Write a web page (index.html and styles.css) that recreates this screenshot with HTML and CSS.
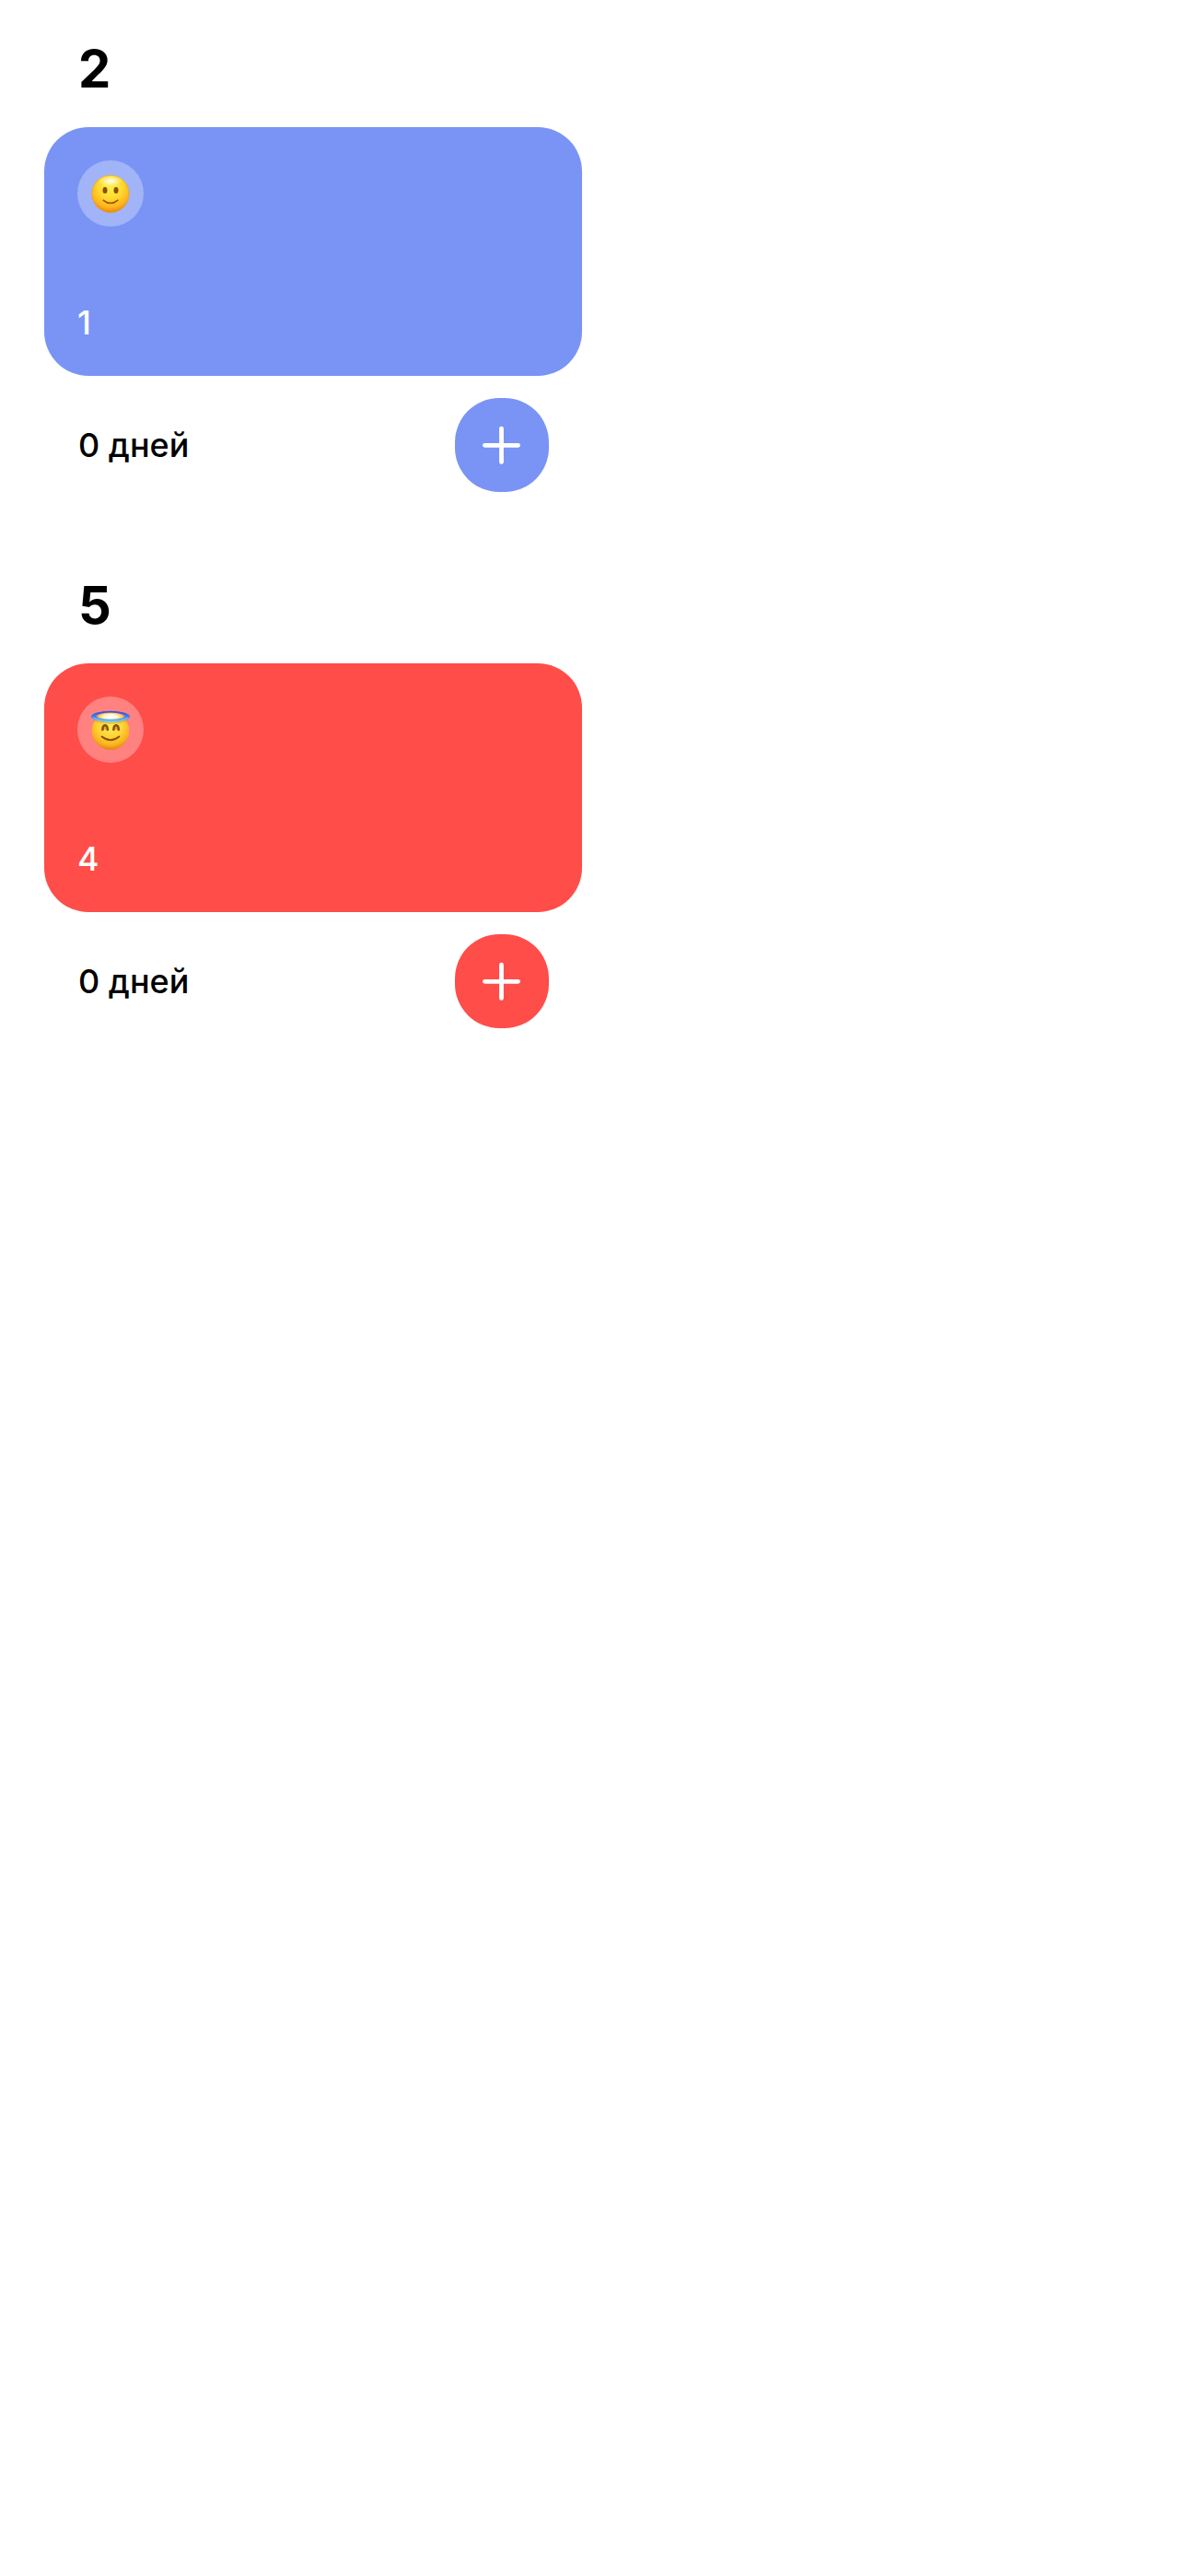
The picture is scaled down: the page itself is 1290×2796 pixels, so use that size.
FILE: index.html
```html
<!DOCTYPE html>
<html lang="ru">
<head>
<meta charset="utf-8">
<title>Трекеры</title>
<link rel="stylesheet" href="styles.css">
</head>
<body>
<main class="trackers">
  <section class="category blue">
    <h2 class="category-title">2</h2>
    <article class="card">
      <span class="emoji">
        <svg width="48" height="48" viewBox="0 0 48 48" role="img" aria-label="Улыбка">
          <defs>
            <radialGradient id="smile-face" gradientUnits="userSpaceOnUse" cx="24" cy="17" r="29">
              <stop offset="0" stop-color="#fff04a"/>
              <stop offset=".45" stop-color="#ffd830"/>
              <stop offset=".75" stop-color="#ffb51c"/>
              <stop offset="1" stop-color="#e57f08"/>
            </radialGradient>
            <radialGradient id="smile-shine">
              <stop offset="0" stop-color="#fff" stop-opacity=".95"/>
              <stop offset=".4" stop-color="#fffde0" stop-opacity=".65"/>
              <stop offset="1" stop-color="#fff8a0" stop-opacity="0"/>
            </radialGradient>
          </defs>
          <circle cx="24" cy="24.3" r="20.4" fill="url(#smile-face)"/>
          <circle cx="24" cy="24.3" r="19.9" fill="none" stroke="#e39a12" stroke-opacity=".5" stroke-width="1"/>
          <ellipse cx="24" cy="10.5" rx="14" ry="6.3" fill="url(#smile-shine)"/>
          <ellipse cx="18" cy="20.4" rx="2.5" ry="3.5" fill="#895000"/>
          <ellipse cx="30" cy="20.4" rx="2.5" ry="3.5" fill="#895000"/>
          <path d="M16.2 31.3Q24 37.8 31.8 31.3" fill="none" stroke="#8e5300" stroke-width="1.5" stroke-linecap="round"/>
        </svg>
      </span>
      <p class="card-name">1</p>
    </article>
    <div class="footer">
      <span class="days">0 дней</span>
      <button class="add" aria-label="Добавить">
        <svg width="42" height="42" viewBox="0 0 42 42"><path d="M20.5 3.2V39.4M2.4 21.3H38.6" /></svg>
      </button>
    </div>
  </section>

  <section class="category red">
    <h2 class="category-title">5</h2>
    <article class="card">
      <span class="emoji">
        <svg width="48" height="48" viewBox="0 0 48 48" role="img" aria-label="Ангел">
          <defs>
            <radialGradient id="angel-face" gradientUnits="userSpaceOnUse" cx="24" cy="19" r="28">
              <stop offset="0" stop-color="#ffed55"/>
              <stop offset=".5" stop-color="#ffd235"/>
              <stop offset=".78" stop-color="#f9b120"/>
              <stop offset="1" stop-color="#d67d08"/>
            </radialGradient>
            <radialGradient id="angel-shine">
              <stop offset="0" stop-color="#fff"/>
              <stop offset=".55" stop-color="#fff9d0"/>
              <stop offset="1" stop-color="#ffc03a"/>
            </radialGradient>
            <linearGradient id="halo" x1="0" y1="0" x2="0" y2="1">
              <stop offset="0" stop-color="#2446df"/>
              <stop offset=".45" stop-color="#327ff1"/>
              <stop offset="1" stop-color="#66baff"/>
            </linearGradient>
          </defs>
          <circle cx="24" cy="25.4" r="20.3" fill="url(#angel-face)"/>
          <ellipse cx="24" cy="10" rx="13.5" ry="4.6" fill="url(#angel-shine)"/>
          <path d="M6 14Q24 20 42 14" fill="none" stroke="#bf9c38" stroke-opacity=".4" stroke-width="2"/>
          <path fill="url(#halo)" fill-rule="evenodd" d="M3 9.7a21 6 0 1 0 42 0a21 6 0 1 0-42 0ZM8.5 9.2a15.5 3.6 0 1 0 31 0a15.5 3.6 0 1 0-31 0Z"/>
          <path d="M5.5 11C10 15.5 38 15.5 42.5 11" fill="none" stroke="#7cc8ff" stroke-width="1"/>
          <path d="M15.4 24C15.6 17.6 20.6 17.6 20.8 24M27.4 24C27.6 17.6 32.6 17.6 32.8 24" fill="#a96b12" fill-opacity=".35" stroke="#8a5209" stroke-width="2.6" stroke-linecap="round"/>
          <path d="M14.6 31.6Q24 39 33.4 31.6" fill="none" stroke="#8a4f05" stroke-width="1.9" stroke-linecap="round"/>
        </svg>
      </span>
      <p class="card-name">4</p>
    </article>
    <div class="footer">
      <span class="days">0 дней</span>
      <button class="add" aria-label="Добавить">
        <svg width="42" height="42" viewBox="0 0 42 42"><path d="M20.5 3.2V39.4M2.4 21.3H38.6" /></svg>
      </button>
    </div>
  </section>
</main>
</body>
</html>
```
FILE: styles.css
```css
* {
  box-sizing: border-box;
}

body {
  margin: 0;
  min-height: 2796px;
  background: #fff;
  color: #000;
  font-family: Inter, "Liberation Sans", sans-serif;
}

.trackers {
  display: flex;
  flex-direction: column;
  gap: 48px;
  width: 632px;
  padding-left: 48px;
}

.category {
  display: flex;
  flex-direction: column;
  height: 534px;
}

.blue {
  --tint: #7994f5;
}

.red {
  --tint: #ff4d49;
}

.category-title {
  height: 138px;
  margin: 0;
  padding: 41px 37px 0;
  font-size: 56px;
  font-weight: 700;
  line-height: 68px;
}

.card {
  display: flex;
  flex-direction: column;
  justify-content: space-between;
  align-items: flex-start;
  height: 270px;
  padding: 36px 36px 32px;
  border-radius: 48px;
  background: var(--tint);
}

.emoji {
  display: flex;
  align-items: center;
  justify-content: center;
  width: 72px;
  height: 72px;
  border-radius: 50%;
  background: rgba(255, 255, 255, 0.3);
}

.card-name {
  margin: 0;
  color: #fff;
  font-size: 36px;
  font-weight: 450;
  line-height: 52px;
}

.footer {
  display: flex;
  align-items: center;
  justify-content: space-between;
  margin-top: 24px;
  padding: 0 36px;
}

.days {
  padding-left: 1px;
  font-size: 36px;
  font-weight: 450;
  line-height: 54px;
}

.add {
  display: flex;
  align-items: center;
  justify-content: center;
  width: 102px;
  height: 102px;
  padding: 0;
  border: 0;
  border-radius: 48px;
  background: var(--tint);
}

.add path {
  fill: none;
  stroke: #fff;
  stroke-width: 4.8;
  stroke-linecap: round;
}
```
